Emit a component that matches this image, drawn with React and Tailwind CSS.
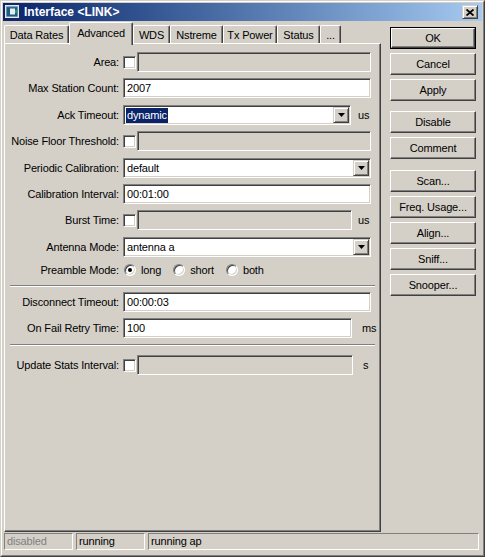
import React from "react";

const FONT = "font-['Liberation_Sans',Arial,sans-serif]";
const sunken =
  "border border-t-[#808080] border-l-[#808080] border-r-white border-b-white shadow-[inset_1px_1px_0_#404040,inset_-1px_-1px_0_#d4d0c8]";
const raised =
  "bg-[#d4d0c8] border border-t-white border-l-white border-r-[#404040] border-b-[#404040] shadow-[inset_-1px_-1px_0_#808080]";
const raisedSmall =
  "bg-[#d4d0c8] border border-t-[#d4d0c8] border-l-[#d4d0c8] border-r-[#404040] border-b-[#404040] shadow-[inset_1px_1px_0_#ffffff,inset_-1px_-1px_0_#808080]";

function Row({ label, children, className = "" }) {
  return (
    <div className={"flex items-center h-[20px] " + className}>
      <div className="w-[114px] text-right whitespace-nowrap leading-none">{label}</div>
      <div className="ml-[4px] flex items-center h-full">{children}</div>
    </div>
  );
}

function TextBox({ w, children }) {
  return (
    <div className={`${sunken} bg-white h-[20px] flex items-center pl-[3px]`} style={{ width: w }}>
      {children}
    </div>
  );
}

function Arrow() {
  return (
    <svg width="7" height="4" viewBox="0 0 7 4">
      <path d="M0 0H7L3.5 4Z" fill="#000" />
    </svg>
  );
}

function Combo({ w, children }) {
  return (
    <div className={`${sunken} bg-white h-[20px] flex items-center pl-[3px] pr-[1px]`} style={{ width: w }}>
      <div className="flex-1 flex items-center">{children}</div>
      <div className={`${raisedSmall} w-[16px] h-[16px] flex items-center justify-center`}>
        <Arrow />
      </div>
    </div>
  );
}

function Check() {
  return <div className={`${sunken} bg-white w-[13px] h-[13px]`} />;
}

function Disabled({ w }) {
  return <div className={`${sunken} bg-[#d4d0c8] h-[20px] ml-[1px]`} style={{ width: w }} />;
}

function Radio({ on }) {
  return (
    <div className="w-[12px] h-[12px] rounded-full border border-t-[#808080] border-l-[#808080] border-r-white border-b-white shadow-[inset_1px_1px_0_#404040,inset_-1px_-1px_0_#d4d0c8] bg-white flex items-center justify-center">
      {on && <div className="w-[4px] h-[4px] rounded-full bg-black" />}
    </div>
  );
}

function Sep({ className = "" }) {
  return <div className={"h-[2px] mx-[5px] border-t border-t-[#808080] border-b border-b-white " + className} />;
}

function Btn({ children, className = "", def = false }) {
  if (def) {
    return (
      <div className={"w-[86px] h-[22px] border border-black " + className}>
        <div className={`${raised} w-full h-full flex items-center justify-center`}>{children}</div>
      </div>
    );
  }
  return (
    <div className={`${raised} w-[86px] h-[22px] flex items-center justify-center ` + className}>{children}</div>
  );
}

function Tab({ w, children, active = false }) {
  if (active) {
    return (
      <div
        className="relative z-10 h-[23px] -mb-[2px] bg-[#d4d0c8] border-l border-t border-l-white border-t-white border-r border-r-[#404040] shadow-[inset_-1px_0_0_#808080] rounded-t-[2px] flex items-start justify-center pt-[5px]"
        style={{ width: w }}
      >
        {children}
      </div>
    );
  }
  return (
    <div
      className="h-[18px] bg-[#d4d0c8] border-l border-t border-l-white border-t-white border-r border-r-[#404040] shadow-[inset_-1px_0_0_#808080] rounded-t-[2px] flex items-center justify-center pt-[1px]"
      style={{ width: w }}
    >
      {children}
    </div>
  );
}

export default function App() {
  return (
    <div className={`w-[485px] h-[557px] bg-[#d4d0c8] border border-t-[#d4d0c8] border-l-[#d4d0c8] border-r-[#404040] border-b-[#404040] text-[11px] tracking-[-0.15px] text-black ${FONT}`}>
      <div className="w-full h-full border border-t-white border-l-white border-r-[#808080] border-b-[#808080] p-[1px] flex flex-col">
        {/* Title bar */}
        <div className="h-[18px] bg-linear-to-r from-[#0a246a] to-[#a6caf0] flex items-center shrink-0">
          <svg width="16" height="14" viewBox="0 0 16 14" className="ml-[2px]">
            <rect x="0.5" y="0.5" width="13" height="12" fill="#c8c8c8" stroke="#e8e8e8" />
            <rect x="1.5" y="2" width="11" height="9.5" fill="#1d5a85" />
            <rect x="5" y="3.5" width="5" height="6" fill="#e8eef0" />
            <rect x="10" y="5" width="2.5" height="3" fill="#2a9a5a" />
            <rect x="1.5" y="1.5" width="11" height="1" fill="#3a78b0" />
          </svg>
          <div className="ml-[3px] text-white text-[12px] tracking-normal leading-none whitespace-nowrap">
            <span className="font-bold">Interface</span> <span className="font-semibold">&lt;LINK&gt;</span>
          </div>
          <div className="flex-1" />
          <div className={`${raisedSmall} w-[16px] h-[14px] mr-[4px] flex items-center justify-center`}>
            <svg width="8" height="7" viewBox="0 0 8 7">
              <path d="M0.5 0.5L7.5 6.5M7.5 0.5L0.5 6.5" stroke="#000" strokeWidth="1.8" />
            </svg>
          </div>
        </div>

        {/* Main */}
        <div className="flex mt-[1px] h-[510px] shrink-0">
          {/* Left column */}
          <div className="ml-[1px] w-[377px] flex flex-col">
            <div className="h-[21px] flex items-end leading-none">
              <Tab w={65}>Data Rates</Tab>
              <Tab w={64} active>Advanced</Tab>
              <Tab w={37}>WDS</Tab>
              <Tab w={53}>Nstreme</Tab>
              <Tab w={54}>Tx Power</Tab>
              <Tab w={43}>Status</Tab>
              <Tab w={21}>...</Tab>
            </div>
            <div className="h-[489px] border border-t-white border-l-white border-r-[#404040] border-b-[#404040] shadow-[inset_-1px_-1px_0_#808080] pt-[8px] flex flex-col">
              <Row label="Area:">
                <Check />
                <Disabled w={234} />
              </Row>
              <Row label="Max Station Count:" className="mt-[6px]">
                <TextBox w={248}>2007</TextBox>
              </Row>
              <Row label="Ack Timeout:" className="mt-[7px]">
                <Combo w={228}>
                  <span className="bg-[#0a246a] text-white leading-[15px] px-[1px] -ml-[1px]">dynamic</span>
                </Combo>
                <span className="ml-[7px]">us</span>
              </Row>
              <Row label="Noise Floor Threshold:" className="mt-[6px]">
                <Check />
                <Disabled w={234} />
              </Row>
              <Row label="Periodic Calibration:" className="mt-[7px]">
                <Combo w={248}>default</Combo>
              </Row>
              <Row label="Calibration Interval:" className="mt-[6px]">
                <TextBox w={248}>00:01:00</TextBox>
              </Row>
              <Row label="Burst Time:" className="mt-[6px]">
                <Check />
                <Disabled w={215} />
                <span className="ml-[6px]">us</span>
              </Row>
              <Row label="Antenna Mode:" className="mt-[7px]">
                <Combo w={248}>antenna a</Combo>
              </Row>
              <div className="flex items-center h-[16px] mt-[5px]">
                <div className="w-[114px] text-right whitespace-nowrap leading-none">Preamble Mode:</div>
                <div className="ml-[5px] flex items-center">
                  <Radio on />
                  <span className="ml-[5px]">long</span>
                  <div className="ml-[12px]"><Radio /></div>
                  <span className="ml-[5px]">short</span>
                  <div className="ml-[12px]"><Radio /></div>
                  <span className="ml-[5px]">both</span>
                </div>
              </div>
              <Sep className="mt-[7px]" />
              <Row label="Disconnect Timeout:" className="mt-[5px]">
                <TextBox w={248}>00:00:03</TextBox>
              </Row>
              <Row label="On Fail Retry Time:" className="mt-[6px]">
                <TextBox w={229}>100</TextBox>
                <span className="ml-[10px]">ms</span>
              </Row>
              <Sep className="mt-[6px]" />
              <Row label="Update Stats Interval:" className="mt-[9px]">
                <Check />
                <Disabled w={216} />
                <span className="ml-[10px]">s</span>
              </Row>
            </div>
          </div>

          {/* Right column */}
          <div className="ml-[9px] pt-[5px] flex flex-col leading-none">
            <Btn def>OK</Btn>
            <Btn className="mt-[4px]">Cancel</Btn>
            <Btn className="mt-[4px]">Apply</Btn>
            <Btn className="mt-[10px]">Disable</Btn>
            <Btn className="mt-[4px]">Comment</Btn>
            <Btn className="mt-[11px]">Scan...</Btn>
            <Btn className="mt-[4px]">Freq. Usage...</Btn>
            <Btn className="mt-[4px]">Align...</Btn>
            <Btn className="mt-[4px]">Sniff...</Btn>
            <Btn className="mt-[4px]">Snooper...</Btn>
          </div>
        </div>

        {/* Status bar */}
        <div className="flex mt-[1px] ml-[1px] h-[17px] shrink-0 gap-[3px] leading-none">
          <div className="w-[69px] border border-t-[#808080] border-l-[#808080] border-r-white border-b-white flex items-center pl-[2px] text-[#808080]">
            disabled
          </div>
          <div className="w-[69px] border border-t-[#808080] border-l-[#808080] border-r-white border-b-white flex items-center pl-[2px]">
            running
          </div>
          <div className="w-[331px] border border-t-[#808080] border-l-[#808080] border-r-white border-b-white flex items-center pl-[2px]">
            running ap
          </div>
        </div>
      </div>
    </div>
  );
}
